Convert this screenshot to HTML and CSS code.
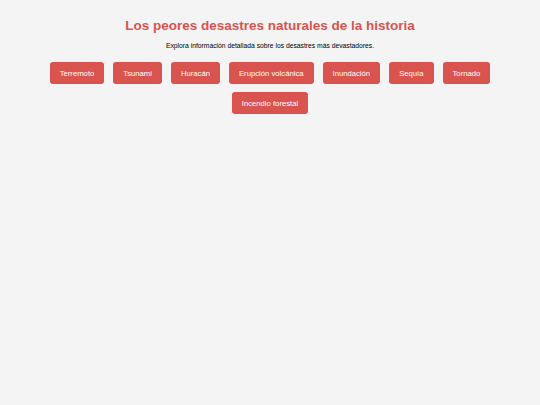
FILE: index.html
```html
<!DOCTYPE html>
<html lang="es">
<head>
<meta charset="utf-8">
<title>Los peores desastres naturales de la historia</title>
<link rel="stylesheet" href="styles.css">
</head>
<body>
<main class="page">
  <h1 class="title">Los peores desastres naturales de la historia</h1>
  <p class="subtitle">Explora información detallada sobre los desastres más devastadores.</p>
  <nav class="buttons">
    <button class="btn">Terremoto</button>
    <button class="btn">Tsunami</button>
    <button class="btn">Huracán</button>
    <button class="btn">Erupción volcánica</button>
    <button class="btn">Inundación</button>
    <button class="btn">Sequía</button>
    <button class="btn">Tornado</button>
    <button class="btn">Incendio forestal</button>
  </nav>
</main>
</body>
</html>
```
FILE: styles.css
```css
html, body {
  margin: 0;
  padding: 0;
  background: #f4f4f4;
}
body {
  font-family: "Liberation Sans", Arial, sans-serif;
  color: #000;
}
.page {
  padding-top: 17px;
  text-align: center;
}
.title {
  margin: 0;
  font-size: 13.5px;
  line-height: 17px;
  font-weight: bold;
  color: #d9534f;
}
.subtitle {
  margin: 7px 0 0;
  font-size: 6.75px;
  line-height: 9px;
}
.buttons {
  margin: 12px auto 0;
  display: flex;
  flex-wrap: wrap;
  justify-content: center;
  gap: 8px 9px;
  max-width: 460px;
}
.btn {
  height: 22px;
  padding: 0 10px;
  border: none;
  border-radius: 3px;
  background: #d9534f;
  color: #fff;
  font-family: "Liberation Sans", Arial, sans-serif;
  font-size: 7.7px;
}
```
